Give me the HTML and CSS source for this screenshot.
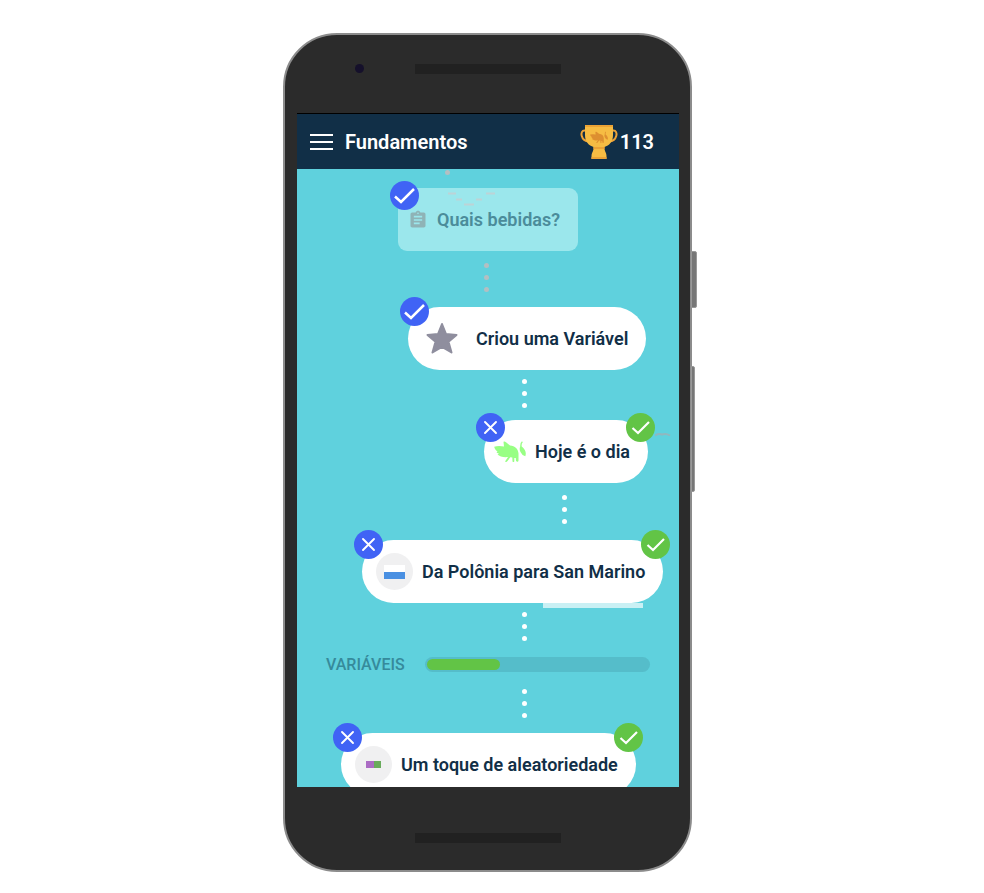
FILE: index.html
```html
<!DOCTYPE html>
<html lang="pt-BR">
<head>
<meta charset="utf-8">
<meta name="viewport" content="width=device-width, initial-scale=1">
<title>Fundamentos</title>
<link rel="stylesheet" href="styles.css">
</head>
<body>
<svg class="defs" aria-hidden="true">
  <symbol id="check" viewBox="0 0 29 29"><path d="M5 15.500 11 21 24 8" fill="none" stroke="#fff" stroke-width="2.500"/></symbol>
  <symbol id="tick" viewBox="0 0 29 29"><path d="M6.500 15 12 20 23 9" fill="none" stroke="#fff" stroke-width="2.200"/></symbol>
  <symbol id="cross" viewBox="0 0 29 29"><path d="M9 9 20 20M20 9 9 20" fill="none" stroke="#fff" stroke-width="1.900" stroke-linecap="round"/></symbol>
  <symbol id="hopper" viewBox="0 0 32 22">
    <path d="M9.500 1C10 .3 11 .5 12 1.200L16 4.500C21 4.800 24.300 8 24.500 12.500L24.500 19.500Q24.300 21 23.200 20.800L22 20 21.800 17 20.300 17 20.300 20.500Q19.500 21.500 18.500 20.500L18.300 16.500 16.300 16.300 13.500 20Q12.300 21.500 11 20.500L14 16C9.500 16.500 5.500 15.500 3.500 13.500L5 12.800 2.500 11.500 3.500 10.500C1.500 9.300.5 7.500.2 5.800Q4 4.500 10 5.500Z"/>
    <path d="M28 .3Q26 1.500 26.200 5.500Q25 8.500 26.500 11Q28 14.500 31.300 15.200Q32.500 12 30.800 9Q29.500 6.500 27.700 5.500Q27.300 2.500 28.800 1.200Z"/>
  </symbol>
</svg>

<div class="phone">
  <div class="side-button power"></div>
  <div class="side-button volume"></div>
  <div class="bezel bezel-top">
    <span class="camera"></span>
    <span class="speaker"></span>
  </div>
  <div class="screen">
    <header class="topbar">
      <button class="menu" type="button" aria-label="Menu"><span></span><span></span><span></span></button>
      <h1>Fundamentos</h1>
      <div class="score">
        <svg class="trophy" viewBox="0 0 38 36" aria-hidden="true">
          <path d="M6 6.500H4.500C-.5 6.500.5 17 9 17.500M32 6.500H33.500C38.500 6.500 37.500 17 29 17.500" fill="none" stroke="#eda238" stroke-width="2"/>
          <path d="M5 1H33V11C33 18 29 21.500 24.500 23V25C25 28 26.500 29 26.500 32V35H11.500V32C11.500 29 13 28 13.500 25V23C9 21.500 5 18 5 11Z" fill="#f6bc43"/>
          <path d="M5 1H33V3H5ZM13.500 23H24.500V25H13.500ZM11.500 33H26.500V35H11.500Z" fill="#eba336"/>
          <svg x="10" y="7" width="18" height="13" viewBox="0 0 32 22" fill="#dd8f30"><use href="#hopper" width="32" height="22"/></svg>
        </svg>
        <span>113</span>
      </div>
    </header>

    <main class="trail">
      <span class="stray-dot"></span>
      <a class="card card-done" href="#bebidas">
        <svg class="clipboard" viewBox="0 0 24 24" aria-hidden="true"><path d="M19 3h-4.180C14.400 1.840 13.300 1 12 1s-2.400.84-2.820 2H5c-1.100 0-2 .9-2 2v14c0 1.100.9 2 2 2h14c1.100 0 2-.9 2-2V5c0-1.100-.9-2-2-2zm-7 0c.55 0 1 .45 1 1s-.45 1-1 1-1-.45-1-1 .45-1 1-1zm2 14H7v-2h7v2zm3-4H7v-2h10v2zm0-4H7V7h10v2z"/></svg>
        <span>Quais bebidas?</span>
        <svg class="sketch" viewBox="0 0 50 16" aria-hidden="true"><path d="M1 2.500H9M9 8.500H15M17 13.500H27M29 8.500H35M39 2.500H48"/></svg>
        <svg class="badge blue left low" aria-hidden="true"><use href="#check"/></svg>
      </a>
      <div class="dots muted dots-a"><i></i><i></i><i></i></div>

      <a class="card card-star" href="#variavel">
        <svg class="star" viewBox="0 0 34 34" aria-hidden="true"><path d="M17 2 21 12 31.500 13 23.500 19.700 26.500 30.500 17 25 7.500 30.500 10.500 19.700 2.500 13 13 12Z"/></svg>
        <span>Criou uma Variável</span>
        <svg class="badge blue left" aria-hidden="true"><use href="#check"/></svg>
      </a>
      <div class="dots dots-b"><i></i><i></i><i></i></div>

      <a class="card card-day" href="#hoje">
        <svg class="hopper" aria-hidden="true"><use href="#hopper"/></svg>
        <span>Hoje é o dia</span>
        <svg class="squiggle" viewBox="0 0 16 5" aria-hidden="true"><path d="M0 3.500Q4 1 7 2.500Q11 1 15 3.500"/></svg>
        <svg class="badge blue left low" aria-hidden="true"><use href="#cross"/></svg>
        <svg class="badge green right low" aria-hidden="true"><use href="#tick"/></svg>
      </a>
      <div class="dots dots-c"><i></i><i></i><i></i></div>

      <a class="card card-flag" href="#san-marino">
        <svg class="round" viewBox="0 0 37 37" aria-hidden="true"><circle cx="18.500" cy="18.500" r="18.500" fill="#f0f0f1"/><path d="M8 12H29V19H8Z" fill="#fff"/><path d="M8 19H29V26H8Z" fill="#4a90e2"/></svg>
        <span>Da Polônia para San Marino</span>
        <span class="strip"></span>
        <svg class="badge blue left" aria-hidden="true"><use href="#cross"/></svg>
        <svg class="badge green right" aria-hidden="true"><use href="#tick"/></svg>
      </a>
      <div class="dots dots-d"><i></i><i></i><i></i></div>

      <section class="unit">
        <h2 id="unit-name">Variáveis</h2>
        <div class="meter" role="progressbar" aria-labelledby="unit-name" aria-valuemin="0" aria-valuemax="100" aria-valuenow="33"><div class="fill" style="width: 33%"></div></div>
      </section>
      <div class="dots dots-e"><i></i><i></i><i></i></div>

      <a class="card card-random" href="#aleatoriedade">
        <svg class="round" viewBox="0 0 37 37" aria-hidden="true"><circle cx="18.500" cy="18.500" r="18.500" fill="#f0f0f1"/><path d="M11 15H19V22H11Z" fill="#ab6cc4"/><path d="M19 15H26V22H19Z" fill="#69ab5c"/></svg>
        <span>Um toque de aleatoriedade</span>
        <svg class="badge blue left" aria-hidden="true"><use href="#cross"/></svg>
        <svg class="badge green right" aria-hidden="true"><use href="#tick"/></svg>
      </a>
    </main>
  </div>
  <div class="bezel bezel-bottom"><span class="speaker"></span></div>
</div>
</body>
</html>
```

FILE: styles.css
```css
* { box-sizing: border-box; }

body {
  margin: 0;
  min-height: 100vh;
  padding: 33px 9px 21px 0;
  display: flex;
  justify-content: center;
  background: #fff;
  font-family: Roboto, sans-serif;
}

.defs { position: absolute; width: 0; height: 0; }

.phone {
  position: relative;
  width: 100%;
  max-width: 409px;
  height: calc(100vh - 54px);
  display: flex;
  flex-direction: column;
  padding: 0 11px 0 12px;
  border: 2px solid #8c8c8c;
  border-radius: 54px;
  background: #2b2b2b;
}

.side-button {
  position: absolute;
  left: 100%;
  margin-left: 1px;
  background: #777;
  border: 1px solid #999;
  border-radius: 0 2px 2px 0;
}
.power { top: 216px; width: 6px; height: 57px; }
.volume { top: 331px; width: 4px; height: 126px; }

.bezel { flex: none; display: flex; justify-content: center; }
.bezel-top { position: relative; height: 78px; padding-top: 29px; }
.bezel-bottom { height: 83px; padding-top: 46px; }
.speaker { width: 146px; height: 10px; background: #212121; }
.camera {
  position: absolute;
  left: 58px;
  top: 29px;
  width: 9px;
  height: 9px;
  border-radius: 50%;
  background: #15102b;
}

.screen {
  flex: 1;
  min-height: 0;
  display: flex;
  flex-direction: column;
  overflow: hidden;
  border-top: 1px solid #000;
  background: #5fd1dd;
}

.topbar {
  flex: none;
  height: 55px;
  display: flex;
  align-items: center;
  padding: 1px 25px 0 13px;
  background: #112f47;
  color: #fff;
}
.menu {
  width: 23px;
  padding: 0;
  border: 0;
  background: none;
  display: flex;
  flex-direction: column;
  gap: 5px;
}
.menu span { height: 2px; background: #fff; }
h1 { margin: 0 0 0 12px; font-size: 20px; line-height: 24px; font-weight: 600; }
.score {
  margin-left: auto;
  display: flex;
  align-items: center;
  gap: 2px;
  font-size: 20px;
  line-height: 24px;
  font-weight: 600;
}
.trophy { width: 38px; height: 36px; }

.trail {
  position: relative;
  flex: 1;
  min-height: 0;
  overflow: hidden;
  display: flex;
  flex-direction: column;
  align-items: flex-start;
  padding-top: 19px;
}

.card {
  position: relative;
  flex: none;
  height: 63px;
  display: flex;
  align-items: center;
  padding-right: 18px;
  border-radius: 32px;
  background: #fff;
  color: #112f47;
  font-size: 18px;
  line-height: 24px;
  font-weight: 600;
  white-space: nowrap;
  text-decoration: none;
}
.card-done { margin-left: 101px; padding-left: 10px; gap: 9px; border-radius: 9px; background: #9be7ec; color: #4b8c9a; }
.card-star { margin-left: 111px; padding-left: 17px; gap: 17px; }
.card-day { margin-left: 187px; padding-left: 10px; gap: 9px; }
.card-flag { margin-left: 65px; padding-left: 14px; gap: 9px; }
.card-random { margin-left: 44px; padding-left: 14px; gap: 9px; }

.clipboard { width: 20px; height: 20px; fill: #8fb3b6; }
.star { width: 34px; height: 34px; fill: #8f8e9e; stroke: #8f8e9e; stroke-width: 2; stroke-linejoin: round; }
.hopper { width: 32px; height: 22px; fill: #98ff84; }
.round { width: 37px; height: 37px; }

.badge { position: absolute; top: -10px; width: 29px; height: 29px; border-radius: 50%; }
.low { top: -7px; }
.left { left: -8px; }
.right { right: -7px; }
.blue { background: #4063f5; }
.green { background: #62c446; }

.sketch { position: absolute; left: 49px; top: 3px; width: 50px; height: 16px; fill: none; stroke: #bdd3d6; stroke-width: 2; }
.squiggle { position: absolute; right: -23px; top: 12px; width: 16px; height: 5px; fill: none; stroke: #91b7be; stroke-width: 2; }
.strip { position: absolute; right: 20px; bottom: -5px; width: 100px; height: 5px; background: #c9f0f4; }
.stray-dot { position: absolute; left: 148px; top: 1px; width: 5px; height: 5px; border-radius: 50%; background: #b3bfc2; }

.dots { flex: none; display: flex; flex-direction: column; gap: 7px; }
.dots i { width: 5px; height: 5px; border-radius: 50%; background: #fff; }
.muted i { background: #b3bfc2; }
.dots-a { margin: 12px 0 15px 187px; }
.dots-b { margin: 9px 0 12px 225px; }
.dots-c { margin: 12px 0 16px 265px; }
.dots-d { margin: 9px 0 16px 225px; }
.dots-e { margin: 17px 0 15px 225px; }

.unit {
  flex: none;
  align-self: stretch;
  display: flex;
  align-items: center;
  height: 15px;
  padding: 0 29px;
  gap: 20px;
}
h2 { margin: 0; font-size: 16px; line-height: 20px; font-weight: 500; text-transform: uppercase; color: #368a9b; }
.meter { flex: 1; height: 15px; padding: 2px; border-radius: 8px; background: #55bdca; }
.fill { height: 11px; border-radius: 6px; background: #62c446; }
```
